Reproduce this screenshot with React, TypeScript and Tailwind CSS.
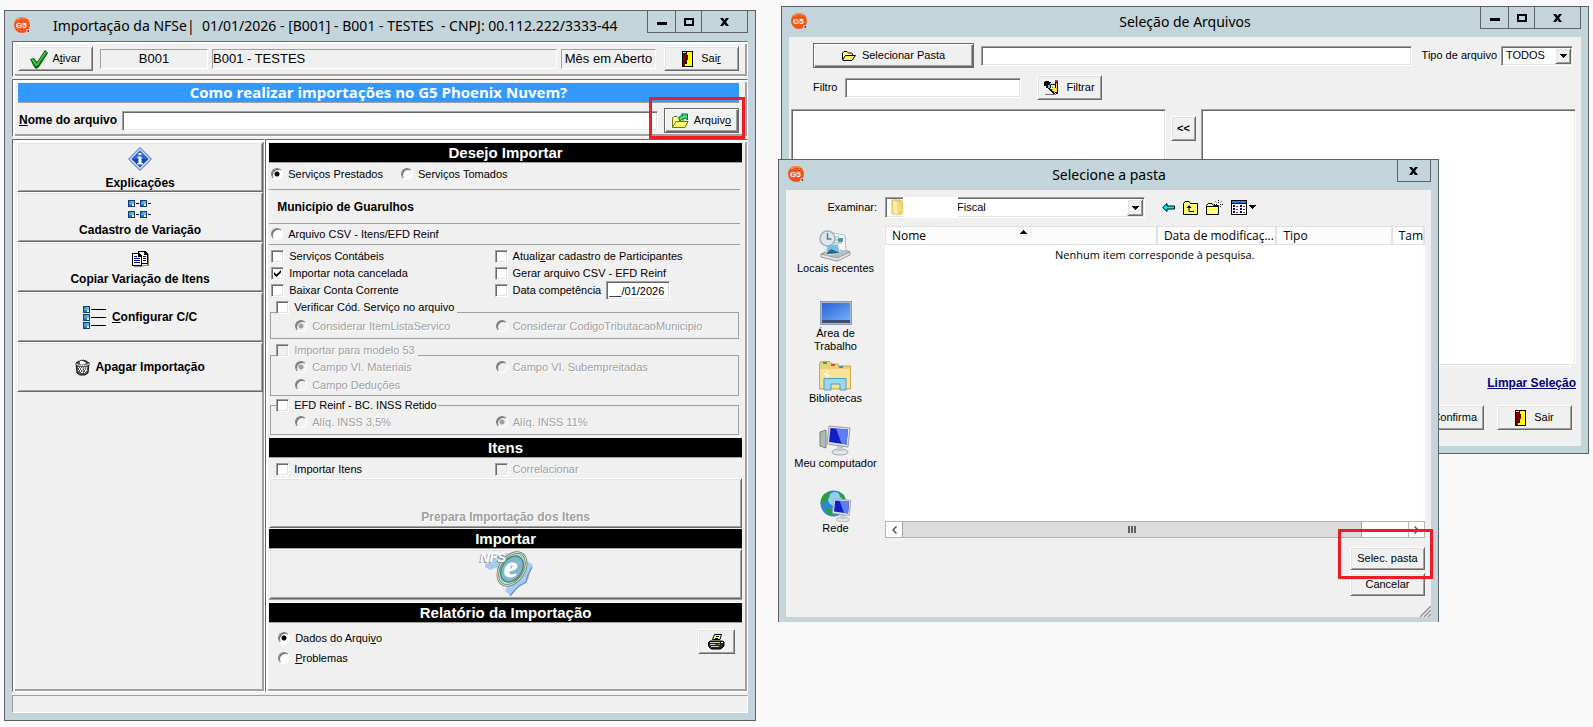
import type { InputHTMLAttributes, ReactNode } from 'react';
import clsx from 'clsx';

const raised =
  'border border-t-white border-l-white border-b-[#696969] border-r-[#696969] bg-[#f0f0f0] shadow-[inset_1px_1px_0_#e3e3e3,inset_-1px_-1px_0_#a0a0a0]';
const raisedDefault =
  'border border-[#696969] bg-[#f0f0f0] shadow-[inset_1px_1px_0_#fff,inset_-1px_-1px_0_#696969,inset_-2px_-2px_0_#a0a0a0]';
const sunken =
  'border border-t-[#a0a0a0] border-l-[#a0a0a0] border-b-white border-r-white bg-white shadow-[inset_1px_1px_0_#696969,inset_-1px_-1px_0_#e3e3e3]';
const field = 'border border-t-[#a0a0a0] border-l-[#a0a0a0] border-b-white border-r-white';
const panel =
  'border border-t-[#696969] border-l-[#696969] border-b-white border-r-white shadow-[inset_2px_2px_0_#fff,inset_-2px_-2px_0_#a0a0a0]';
const boldText = 'text-[12px] font-bold';

function AppIcon() {
  return (
    <svg width="17" height="17" viewBox="0 0 17 17" aria-hidden="true">
      <circle cx="8" cy="8" r="8" fill="#f0561d" />
      <path d="M3 3a7 7 0 0 1 9-1" stroke="#f98a4c" strokeWidth="2" fill="none" />
      <text x="2" y="11" fontSize="8" fontWeight="700" fontFamily="Liberation Sans" fill="#fff">G5</text>
      <circle cx="14" cy="14" r="2" fill="#d9c9cf" />
      <path d="M13 13h2v2h-1z" fill="#7d3f55" />
    </svg>
  );
}

function CheckIcon() {
  return (
    <svg width="18" height="20" viewBox="0 0 18 20" aria-hidden="true">
      <path d="M0 10l4-1 3 4L15 1l3 3L9 18l-3 2-2-2z" fill="#0a4a14" />
      <path d="M1 10l3-.500 3 5L15 2.500l2 1.500L8 17l-3 1z" fill="#12a81e" />
      <path d="M2 10.500l4.500 5.500L15.500 3" stroke="#5fe066" fill="none" />
    </svg>
  );
}

function DoorIcon() {
  return (
    <svg width="11" height="16" viewBox="0 0 11 16" shapeRendering="crispEdges" aria-hidden="true">
      <path d="M0 0h11v16H0z" fill="#000" />
      <path d="M5 1h5v14H2v-2h2V8h1z" fill="#ff0" />
      <path d="M1 1h4v3h1v5H5v4H3v2H1z" fill="#800000" />
      <path d="M2 1h2v1H2z" fill="#0ff" />
      <path d="M4 4h2v1H4zM4 6h1v7H3v-1h1z" fill="#000" />
      <path d="M1 1h1v1H1z" fill="#fff" />
    </svg>
  );
}

function OpenFolderIcon() {
  return (
    <svg width="14" height="10" viewBox="0 0 14 10" aria-hidden="true">
      <path d="M.5 8.500V2L2 .5h3L6.500 2h3L10.500 3v1.500" fill="#ffff8c" stroke="#000" />
      <path d="M.5 9L3.500 4.500h10L10 9.500H1z" fill="#fff36b" stroke="#000" />
    </svg>
  );
}

function ArquivoIcon() {
  return (
    <svg width="17" height="16" viewBox="0 0 17 16" aria-hidden="true">
      <path d="M.5 14V5L2 3.500h3L6.500 5H11v3" fill="#ffff9c" stroke="#77720d" />
      <path d="M.5 14.500L4 8.500h12l-3 6z" fill="#ffff6e" stroke="#77720d" />
      <path d="M7 6c0-3 2-3.500 4-3.500L9.500 1h6v6L13.500 5C12 6 11 5 8 8z" fill="#3fe07c" stroke="#0b6b3a" />
    </svg>
  );
}

function FiltrarIcon() {
  return (
    <svg width="16" height="16" viewBox="0 0 16 16" shapeRendering="crispEdges" aria-hidden="true">
      <path d="M1 1h4v1h2v3H4v3H2V6H0V2h1z" fill="#000" />
      <path d="M5 4h6l2 3-1 6-2 1-7-6z" fill="#000" />
      <path d="M6 3h1v2H6v3H4V5h2z" fill="#3cf" />
      <path d="M7 5h4l1 2v4l-2 2-4-4 1-2z" fill="#ffef7a" />
      <path d="M8 7h1v1H8zM7 9h2v1H7zM9 11h2v1H9z" fill="#7a6a10" />
      <path d="M11 1h3v13h-2z" fill="#000" />
      <path d="M12 3h1v9h-1z" fill="#ffe14a" />
      <path d="M11 0h3v2h-3z" fill="#e22" />
      <path d="M1 14h11v1H1z" fill="#777" />
    </svg>
  );
}

function InfoIcon() {
  return (
    <svg width="24" height="24" viewBox="0 0 24 24" aria-hidden="true">
      <path d="M12 .8L23.200 12 12 23.200.8 12z" fill="#dfe8fa" stroke="#8398cc" strokeLinejoin="round" strokeWidth="1.500" />
      <path d="M12 3.500L20.500 12 12 20.500 3.500 12z" fill="#1746b8" />
      <path d="M12 3.500L20.500 12H3.500z" fill="#2c66dc" />
      <path d="M10.500 6h3v2h-3zM9.500 9.500h4V16H15v1.500H9.500V16h1v-5h-1z" fill="#fff" />
    </svg>
  );
}

function Thumb({ x, y }: { x: number; y: number }) {
  return (
    <g transform={`translate(${x} ${y})`}>
      <path d="M0 0h7v7H0z" fill="#123a8c" />
      <path d="M1 1h5v5H1z" fill="#5cb8ee" />
      <path d="M1 1h2v2H1z" fill="#2fae3f" />
      <path d="M4 4h2v2H4z" fill="#fff3a0" />
      <path d="M1 4h3v2H1z" fill="#2674d4" />
    </g>
  );
}

function VariacaoIcon() {
  return (
    <svg width="24" height="18" viewBox="0 0 24 18" shapeRendering="crispEdges" aria-hidden="true">
      <Thumb x={0} y={0} />
      <Thumb x={12} y={0} />
      <Thumb x={0} y={11} />
      <Thumb x={12} y={11} />
      <path d="M8 3h3v1H8zM20 3h3v1h-3zM8 14h3v1H8zM20 14h3v1h-3z" fill="#000" />
    </svg>
  );
}

function ListaIcon() {
  return (
    <svg width="24" height="23" viewBox="0 0 24 23" shapeRendering="crispEdges" aria-hidden="true">
      <Thumb x={0} y={0} />
      <Thumb x={0} y={8} />
      <Thumb x={0} y={16} />
      <path d="M8 3h15v1H8zM8 11h15v1H8zM8 19h15v1H8z" fill="#000" />
    </svg>
  );
}

function CopiarIcon() {
  return (
    <svg width="17" height="16" viewBox="0 0 17 16" shapeRendering="crispEdges" aria-hidden="true">
      <path d="M2 15h9v1H2zM15 3h2v12h-6v-1h4z" fill="#888" />
      <path d="M6 0h7l3 3v10H6z" fill="#000" />
      <path d="M7 1h5v3h3v8H7z" fill="#fffde0" />
      <path d="M11 5h3v1h-3zM11 7h3v1h-3zM11 9h3v1h-3z" fill="#000080" />
      <path d="M0 2h7l3 3v10H0z" fill="#000" />
      <path d="M1 3h5v3h3v8H1z" fill="#fff" />
      <path d="M2 5h3v1H2zM2 7h6v1H2zM2 9h6v1H2zM2 11h6v1H2z" fill="#000080" />
    </svg>
  );
}

function LixeiraIcon() {
  return (
    <svg width="15" height="17" viewBox="0 0 15 17" aria-hidden="true">
      <path d="M1 4l3-2 2 1 2-2 3 1 3 2-1 10-3 2H5l-3-2z" fill="#555" stroke="#111" />
      <path d="M4 3l2-2 3 1 3 2-3 2H5z" fill="#fff" stroke="#444" />
      <path d="M1 5c3 2 10 2 13 0" stroke="#eee" fill="none" />
      <path d="M3 8l2 2-2 2M5 8l2 2-2 2 2 2M8 8l-1 2 1 2-1 2M10 8l-1 2 2 2-2 2M12 8l-1 2 1 2" stroke="#fff" fill="none" />
    </svg>
  );
}

function ImpressoraIcon() {
  return (
    <svg width="17" height="16" viewBox="0 0 17 16" aria-hidden="true">
      <path d="M2 7h12l2 1v4l-3 3H3l-2-2-1-4z" fill="#222" stroke="#000" />
      <path d="M6.500.5h7L12 5.500H4.500z" fill="#ffff5a" stroke="#000" />
      <path d="M8 2.500h3M7 4.500h3" stroke="#000" />
      <path d="M2 8.500h10M2 10.500h5M3 12.500h8" stroke="#d0d0d0" />
      <path d="M7 10.500h2" stroke="#f22" />
      <path d="M10 10.500h2" stroke="#2c2" />
      <path d="M13 8.500h2" stroke="#fff" />
    </svg>
  );
}

function NfseLogo() {
  return (
    <svg width="56" height="46" viewBox="0 0 56 46" aria-hidden="true">
      <path
        d="M7 13l6-2 5-5 10-4 9 1 5 8 7-1 6 4-3 7-2 8-8 5-4 3-6 7-5-4 3-6-6-7-3-9-4-1-5 2-5-3z"
        fill="#a5cbf3"
      />
      <path d="M54 16l-4 8-2 7-7 4-4 4-5 6" stroke="#6b97cf" fill="none" strokeWidth="1.500" />
      <g transform="rotate(34 34 18)">
        <ellipse cx="34" cy="18" rx="12" ry="18" fill="#b9d9e6" stroke="#66805c" strokeWidth="2.500" />
        <ellipse cx="34" cy="18" rx="12" ry="18" fill="none" stroke="#dfe0c8" />
        <ellipse cx="34" cy="18" rx="10" ry="14" fill="#7fb6d2" stroke="#4f8a6c" strokeWidth="1.500" />
      </g>
      <text x="1" y="12" fontSize="13" fontStyle="italic" fontWeight="700" fontFamily="Liberation Sans" fill="#8a8f98">NFS</text>
      <text x="2" y="11" fontSize="13" fontStyle="italic" fontWeight="700" fontFamily="Liberation Sans" fill="#fff" aria-hidden="true">NFS</text>
      <text x="26" y="26" fontSize="30" fontStyle="italic" fontWeight="700" fontFamily="Liberation Serif" fill="#fff" stroke="#fff">e</text>
    </svg>
  );
}

function FolderSmallIcon() {
  return (
    <svg width="14" height="16" viewBox="0 0 14 16" aria-hidden="true">
      <path d="M1 1h8l3 2v11l-5 1.500-6-1z" fill="#f2d777" stroke="#d9b548" />
      <path d="M2 1.500L6.500 3v12.500L2 14z" fill="#fbeeb0" />
    </svg>
  );
}

function RecentesIcon() {
  return (
    <svg width="32" height="32" viewBox="0 0 32 32" aria-hidden="true">
      <path d="M2 24l16-7 13 5-13 9z" fill="#b9bcbf" stroke="#8d9193" />
      <path d="M2 24l16 4 13-6v3l-13 6-16-4z" fill="#e5e7e8" stroke="#999" />
      <path d="M13 3l13 2 1 16-14-2z" fill="#f6f8f9" stroke="#b6c0c5" />
      <path d="M15 7h5M15 10h5M15 13h8" stroke="#98a5ad" />
      <path d="M19 8h5v4h-5z" fill="#4d99a6" />
      <path d="M8 15l11-1 2 9-14 2z" fill="#6fc1e8" stroke="#d6e4ea" />
      <path d="M7 24l5-5 9 4z" fill="#28657c" />
      <circle cx="8.500" cy="8.500" r="7.500" fill="#dce8ee" stroke="#9fb0b9" strokeWidth="1.500" />
      <path d="M8.500 3v6h4" stroke="#5f7682" fill="none" strokeWidth="1.500" />
    </svg>
  );
}

function DesktopIcon() {
  return (
    <svg width="32" height="32" viewBox="0 0 32 32" aria-hidden="true">
      <defs>
        <linearGradient id="desk" x1="0" y1="0" x2="1" y2="1">
          <stop offset="0" stopColor="#2b5fd6" />
          <stop offset="1" stopColor="#6fb1f8" />
        </linearGradient>
      </defs>
      <path d="M.5 6.500h31v23H.5z" fill="#aab8d0" stroke="#8b9bb8" />
      <path d="M2 8h28v17H2z" fill="url(#desk)" />
      <path d="M2 25h28v3H2z" fill="#40506c" />
    </svg>
  );
}

function BibliotecasIcon() {
  return (
    <svg width="32" height="32" viewBox="0 0 32 32" aria-hidden="true">
      <path d="M.5 4L2 1.500h9L13 4h6l1 2h11.500v23H.5z" fill="#ecd079" stroke="#cda646" />
      <path d="M4 2h4v2H4z" fill="#21b534" />
      <path d="M12 4h4v2h-4z" fill="#dd4526" />
      <path d="M20 6h4v2h-4z" fill="#3a8fe0" />
      <path d="M1 9h30v19H1z" fill="#f8e29a" />
      <path d="M5 18.500h22V30h-6v-6h-9v6H5z" fill="#9ad6ef" stroke="#4f9fc4" />
      <path d="M8 11v7M5 14l6 2" stroke="#fff" />
    </svg>
  );
}

function Monitor() {
  return (
    <>
      <ellipse cx="21" cy="27" rx="8" ry="3" fill="#e2e4e6" stroke="#a2a5a8" />
      <path d="M18 20h6v6h-6z" fill="#c7cacd" />
      <path d="M10 1l21 2-2 19-21-3z" fill="#dfe2e6" stroke="#9aa0a8" />
      <path d="M11.500 3l17.500 1.500-1.500 15-17.500-2.500z" fill="#0e1fc4" />
      <path d="M17 3.500l12 1-1.500 15-5-1z" fill="#5f7df0" />
    </>
  );
}

function ComputadorIcon() {
  return (
    <svg width="32" height="32" viewBox="0 0 32 32" aria-hidden="true">
      <path d="M1 7l6-2v18l-6-2z" fill="#b5b8bb" stroke="#7a7e82" />
      <path d="M3 8v4" stroke="#7ec83e" />
      <Monitor />
    </svg>
  );
}

function RedeIcon() {
  return (
    <svg width="32" height="32" viewBox="0 0 32 32" aria-hidden="true">
      <circle cx="13.500" cy="13.500" r="13" fill="#2f86d8" />
      <circle cx="15" cy="9" r="7" fill="#8fd0f4" />
      <path d="M4 4l7-3-2 7-5 5-3 2c-1-5 1-8 3-11zM18 1l6 4 1 5-5-3zM5 18l6 1 3 7c-5-1-8-4-9-8z" fill="#2f9e36" />
      <g transform="translate(6 8) scale(.8)">
        <Monitor />
      </g>
    </svg>
  );
}

function BackIcon() {
  return (
    <svg width="13" height="11" viewBox="0 0 13 11" aria-hidden="true">
      <path d="M.7 5.500L5 1.500v2.500h7.500v3H5v2.500z" fill="#00f0f0" stroke="#000" />
    </svg>
  );
}

function UpFolderIcon() {
  return (
    <svg width="15" height="14" viewBox="0 0 15 14" aria-hidden="true">
      <path d="M.5 13.500v-11l1.500-2h4l1.500 2h7v11z" fill="#ffff70" stroke="#000" />
      <path d="M3.500 7L6 4l2.500 3z" fill="#000" />
      <path d="M6 6v4.500h5" fill="none" stroke="#000" />
    </svg>
  );
}

function NewFolderIcon() {
  return (
    <svg width="17" height="16" viewBox="0 0 17 16" aria-hidden="true">
      <path d="M.5 14.500v-9l1.500-2h4l1.500 2h5v9z" fill="#ffff70" stroke="#000" />
      <path d="M.5 6.500h12" stroke="#000" />
      <path d="M12.500 0v3M12.500 6v3M8 4.500h3M14 4.500h3M9.500 1.500l1.500 1.500M14 6l1.500 1.500M15.500 1.500L14 3" stroke="#000" strokeDasharray="1 1" />
    </svg>
  );
}

function ViewIcon() {
  return (
    <svg width="25" height="15" viewBox="0 0 25 15" shapeRendering="crispEdges" aria-hidden="true">
      <path d="M0 0h16v15H0z" fill="#000" />
      <path d="M1 1h14v2H1z" fill="#1f7fe8" />
      <path d="M1 4h14v10H1z" fill="#fff" />
      <path d="M2 5h2v2H2zM2 8h2v2H2zM2 11h2v2H2zM9 5h2v2H9zM9 8h2v2H9zM9 11h2v2H9z" fill="#000080" />
      <path d="M5 6h2v1H5zM5 9h2v1H5zM5 12h2v1H5zM12 6h2v1h-2zM12 9h2v1h-2zM12 12h2v1h-2z" fill="#444" />
      <path d="M18 5h7v1h-1v1h-1v1h-1v1h-1V8h-1V7h-1V6h-1z" fill="#000" />
    </svg>
  );
}

function WindowButtons({ closeOnly }: { closeOnly?: boolean }) {
  return (
    <div className="flex h-[22px] shrink-0 border border-t-0 border-[#5c6068]">
      {!closeOnly && (
        <>
          <button aria-label="Minimizar" className="flex w-7 items-center justify-center border-r border-[#5c6068] pt-1">
            <span className="h-[3px] w-[10px] bg-black" />
          </button>
          <button aria-label="Maximizar" className="flex w-[26px] items-center justify-center border-r border-[#5c6068]">
            <span className="h-2 w-[10px] border-2 border-black" />
          </button>
        </>
      )}
      <button aria-label="Fechar" className={clsx('flex items-center justify-center', closeOnly ? 'w-8' : 'w-[45px]')}>
        <svg width="9" height="8" viewBox="0 0 9 8" aria-hidden="true">
          <path d="M0 0h3l1.500 2L6 0h3L6 4l3 4H6L4.500 6 3 8H0l3-4z" fill="#000" />
        </svg>
      </button>
    </div>
  );
}

interface WindowProps {
  title: string;
  closeOnly?: boolean;
  leftTitle?: boolean;
  className?: string;
  children: ReactNode;
}

function Window({ title, closeOnly, leftTitle, className, children }: WindowProps) {
  return (
    <section className={clsx('min-w-0 border border-[#5c6068] bg-[#c3d5da] px-[7px]', className)}>
      <header className="flex h-[30px] items-start">
        <div className="pt-[6px] pl-[2px]">
          <AppIcon />
        </div>
        <h1
          className={clsx(
            "min-w-0 flex-1 whitespace-pre pt-1 font-['Noto_Sans',sans-serif] text-[14px] leading-[22px]",
            leftTitle ? 'pl-[22px]' : 'text-center',
            !leftTitle && (closeOnly ? 'pl-4' : 'pl-[82px]'),
          )}
        >
          {title}
        </h1>
        <WindowButtons closeOnly={closeOnly} />
      </header>
      {children}
    </section>
  );
}

type OptionProps = InputHTMLAttributes<HTMLInputElement> & { label: ReactNode };

function Check({ label, disabled, ...rest }: OptionProps) {
  return (
    <label className={clsx('flex items-center gap-[5px] whitespace-nowrap', disabled && 'text-[#a0a0a0] text-shadow-[1px_1px_0_#fff]')}>
      <span className="relative flex shrink-0">
        <input
          type="checkbox"
          disabled={disabled}
          {...rest}
          className={clsx(sunken, 'peer size-[13px] appearance-none disabled:bg-[#f0f0f0]')}
        />
        <svg className="pointer-events-none absolute inset-[3px] hidden peer-checked:block" width="7" height="7" viewBox="0 0 7 7" aria-hidden="true">
          <path d="M0 2l2.500 2.500L7 0v2.500L2.500 7 0 4.500z" fill="#000" />
        </svg>
      </span>
      <span>{label}</span>
    </label>
  );
}

function Radio({ label, disabled, ...rest }: OptionProps) {
  return (
    <label className={clsx('flex items-center gap-[5px] whitespace-nowrap', disabled && 'text-[#a0a0a0] text-shadow-[1px_1px_0_#fff]')}>
      <input
        type="radio"
        disabled={disabled}
        {...rest}
        className="size-3 shrink-0 appearance-none rounded-full border border-t-[#808080] border-l-[#808080] border-b-white border-r-white bg-white shadow-[inset_1px_1px_0_#696969] checked:bg-[radial-gradient(circle,#000_2px,#fff_3px)] disabled:bg-[#f0f0f0] disabled:checked:bg-[radial-gradient(circle,#a0a0a0_2px,#f0f0f0_3px)]"
      />
      <span>{label}</span>
    </label>
  );
}

function SectionBar({ children }: { children: ReactNode }) {
  return (
    <div className="border-b border-[#a0a0a0]">
      <h2 className="h-[19px] bg-black text-center text-[15px] leading-[19px] font-bold text-white">{children}</h2>
    </div>
  );
}

function MenuButton({ children, row }: { children: ReactNode; row?: boolean }) {
  return (
    <button
      className={clsx(
        raised,
        boldText,
        'flex h-[50px] items-center justify-center gap-[5px]',
        !row && 'flex-col pt-1',
      )}
    >
      {children}
    </button>
  );
}

const twoColumns = 'grid grid-cols-[223fr_247fr]';
const twoInnerColumns = 'grid h-[18px] grid-cols-[201fr_243fr] items-center';

function ImportOptions() {
  return (
    <div className={clsx(panel, 'min-w-0 flex-1 pt-[3px] pr-[5px] pb-[3px] pl-[3px]')}>
      <SectionBar>Desejo Importar</SectionBar>
      <div className="mr-[2px] flex h-[27px] items-center gap-[18px] border-b border-[#a0a0a0] pb-1 pl-[2px]">
        <Radio name="servico" label="Serviços Prestados" defaultChecked />
        <Radio name="servico" label="Serviços Tomados" />
      </div>
      <p className={clsx(boldText, 'mr-[2px] h-[34px] border-b border-[#a0a0a0] pl-2 leading-[34px]')}>
        Município de Guarulhos
      </p>
      <div className="mr-[2px] flex h-[21px] items-center border-b border-[#a0a0a0] pl-[2px]">
        <Radio name="servico" label="Arquivo CSV - Itens/EFD Reinf" />
      </div>

      <div className={clsx(twoColumns, 'auto-rows-[17px] items-center pt-[3px] pl-[2px]')}>
        <Check label="Serviços Contábeis" />
        <Check label={<>Atuali<u>z</u>ar cadastro de Participantes</>} />
        <Check label="Importar nota cancelada" defaultChecked />
        <Check label="Gerar arquivo CSV - EFD Reinf" />
        <Check label="Baixar Conta Corrente" />
        <div className="flex items-center gap-[5px]">
          <Check label="Data competência" />
          <input aria-label="Data" defaultValue="__/01/2026" className={clsx(sunken, 'h-[19px] w-16 px-[2px]')} />
        </div>
      </div>

      <fieldset className="relative mt-[13px] mr-[3px] ml-[1px] border border-[#a0a0a0] pt-1 pb-[3px] pl-6">
        <legend className="absolute -top-[13px] left-[5px] bg-[#f0f0f0] pr-[3px]">
          <Check label="Verificar Cód. Serviço no arquivo" />
        </legend>
        <div className={twoInnerColumns}>
          <Radio name="cod" label="Considerar ItemListaServico" defaultChecked disabled />
          <Radio name="cod" label="Considerar CodigoTributacaoMunicipio" disabled />
        </div>
      </fieldset>
      <fieldset className="relative mt-4 mr-[3px] ml-[1px] border border-[#a0a0a0] pt-[2px] pb-[1px] pl-6">
        <legend className="absolute -top-[13px] left-[5px] bg-[#f0f0f0] pr-[3px]">
          <Check label="Importar para modelo 53" disabled />
        </legend>
        <div className={twoInnerColumns}>
          <Radio name="campo" label="Campo VI. Materiais" defaultChecked disabled />
          <Radio name="campo" label="Campo VI. Subempreitadas" disabled />
        </div>
        <div className={twoInnerColumns}>
          <Radio name="campo" label="Campo Deduções" disabled />
        </div>
      </fieldset>
      <fieldset className="relative mt-[9px] mr-[3px] mb-[3px] ml-[1px] border border-[#a0a0a0] pt-[7px] pb-[3px] pl-6">
        <legend className="absolute -top-2 left-[5px] bg-[#f0f0f0] pr-[1px]">
          <Check label="EFD Reinf - BC. INSS Retido" />
        </legend>
        <div className={twoInnerColumns}>
          <Radio name="aliq" label="Alíq. INSS 3,5%" disabled />
          <Radio name="aliq" label="Alíq. INSS 11%" defaultChecked disabled />
        </div>
      </fieldset>

      <SectionBar>Itens</SectionBar>
      <div className={clsx(twoColumns, 'h-5 items-center pt-[2px] pl-[2px]')}>
        <div className="pl-[5px]">
          <Check label="Importar Itens" />
        </div>
        <Check label="Correlacionar" disabled />
      </div>
      <button
        disabled
        className={clsx(raised, boldText, 'mb-[1px] flex h-[50px] w-full items-end justify-center pb-[2px] text-[#a0a0a0] text-shadow-[1px_1px_0_#fff]')}
      >
        Prepara Importação dos Itens
      </button>

      <SectionBar>Importar</SectionBar>
      <button aria-label="Importar NFSe" className={clsx(raised, 'flex h-[50px] w-full items-center justify-center')}>
        <NfseLogo />
      </button>
      <div className="h-1 border-y border-t-[#a0a0a0] border-b-white" />

      <SectionBar>Relatório da Importação</SectionBar>
      <div className="flex h-[65px] items-start justify-between pr-[7px] pl-[9px]">
        <div className="flex flex-col pt-[5px]">
          <div className="flex h-5 items-center">
            <Radio name="relatorio" label={<>Dados do Arqui<u>v</u>o</>} defaultChecked />
          </div>
          <div className="flex h-5 items-center">
            <Radio name="relatorio" label={<><u>P</u>roblemas</>} />
          </div>
        </div>
        <button aria-label="Imprimir" className={clsx(raised, 'mt-[6px] flex h-[25px] w-[37px] items-center justify-center')}>
          <ImpressoraIcon />
        </button>
      </div>
    </div>
  );
}

function ImportWindow() {
  return (
    <Window
      title="Importação da NFSe|  01/01/2026 - [B001] - B001 - TESTES  - CNPJ: 00.112.222/3333-44"
      leftTitle
      className="relative mt-[10px] pb-[7px]"
    >
      <div className="flex flex-col gap-[2px] bg-[#f0f0f0]">
        <div className={clsx(panel, 'flex items-center pt-1 pr-2 pb-[5px] pl-[5px]')}>
          <button className={clsx(raised, 'flex h-[25px] w-[75px] items-center justify-center gap-1')}>
            <CheckIcon />
            <span>A<u>t</u>ivar</span>
          </button>
          <div className="ml-[7px] flex min-w-0 flex-1 gap-1 text-[13px] leading-[18px]">
            <div className={clsx(field, 'w-[108px] text-center')}>B001</div>
            <div className={clsx(field, 'min-w-0 flex-1')}>B001 - TESTES</div>
            <div className={clsx(field, 'w-[95px] text-center whitespace-nowrap')}>Mês em Aberto</div>
          </div>
          <button className={clsx(raised, 'ml-2 flex h-[25px] w-[75px] items-center justify-center gap-2')}>
            <DoorIcon />
            <span>Sai<u>r</u></span>
          </button>
        </div>

        <div className={clsx(panel, 'pt-[3px] pr-2 pb-[3px] pl-[5px]')}>
          <div className="border-b border-[#a0a0a0]">
            <p className="h-[19px] bg-[#3399ff] text-center font-['Open_Sans',sans-serif] text-[15px] leading-[19px] font-bold text-white">
              Como realizar importações no G5 Phoenix Nuvem?
            </p>
          </div>
          <div className="mt-[5px] flex items-center">
            <label htmlFor="arquivo" className={clsx(boldText, 'w-[104px] pl-[1px] whitespace-nowrap')}>
              <u>N</u>ome do arquivo
            </label>
            <input id="arquivo" className={clsx(sunken, 'h-5 min-w-0 flex-1 px-1')} />
            <button className={clsx(raisedDefault, 'ml-[6px] flex h-[25px] w-[75px] items-center justify-center gap-[5px]')}>
              <ArquivoIcon />
              <span>Arquiv<u>o</u></span>
            </button>
          </div>
        </div>

        <div className="flex">
          <nav className={clsx(panel, 'flex w-[34.4%] flex-col pt-[2px] pr-[1px] pl-1')}>
            <MenuButton><InfoIcon />Explicações</MenuButton>
            <MenuButton><VariacaoIcon />Cadastro de Variação</MenuButton>
            <MenuButton><CopiarIcon />Copiar Variação de Itens</MenuButton>
            <MenuButton row><ListaIcon /><span><u>C</u>onfigurar C/C</span></MenuButton>
            <MenuButton row><LixeiraIcon />Apagar Importação</MenuButton>
          </nav>
          <ImportOptions />
        </div>
        <div className="mt-[1px] h-[18px] border border-t-[#a0a0a0] border-l-[#a0a0a0] border-b-white border-r-white" />
      </div>
      <div className="pointer-events-none absolute top-[86px] right-[10px] h-[42px] w-[96px] border-[3px] border-[#ed1c24]" />
    </Window>
  );
}

function ArquivosWindow() {
  return (
    <Window title="Seleção de Arquivos" className="mt-[6px] ml-[3px] pb-[7px]">
      <div className="bg-[#f0f0f0] pt-[6px] pb-4">
        <div className="flex items-center pr-2 pl-6">
          <button className={clsx(raisedDefault, 'flex h-[25px] w-[161px] items-center justify-center gap-[6px]')}>
            <OpenFolderIcon />
            Selecionar Pasta
          </button>
          <input aria-label="Pasta" className={clsx(sunken, 'ml-[7px] h-5 min-w-0 flex-1 px-1')} />
          <label htmlFor="tipo" className="ml-[10px] whitespace-nowrap">Tipo de arquivo</label>
          <div className="relative ml-1">
            <select id="tipo" className={clsx(sunken, 'block h-5 w-[72px] appearance-none pl-1')}>
              <option>TODOS</option>
            </select>
            <DropArrow />
          </div>
        </div>
        <div className="mt-[7px] flex items-center pl-6">
          <label htmlFor="filtro" className="w-8">Filtro</label>
          <input id="filtro" className={clsx(sunken, 'h-5 w-[176px] px-1')} />
          <button className={clsx(raised, 'ml-4 flex h-[25px] w-[65px] items-center justify-center gap-[6px]')}>
            <FiltrarIcon />
            Filtrar
          </button>
        </div>
        <div className="mt-[9px] flex h-[257px] gap-[5px] pr-[5px] pl-[2px]">
          <div className={clsx(sunken, 'flex-1')} />
          <button className={clsx(raised, 'mt-[7px] h-[25px] w-[25px] font-bold')}>&lt;&lt;</button>
          <div className={clsx(sunken, 'flex-1')} />
        </div>
        <div className="mt-[9px] pr-[5px] text-right leading-4">
          <a href="#limpar" className={clsx(boldText, 'text-[#000080] underline')}>Limpar Seleção</a>
        </div>
        <div className="mt-[14px] flex justify-end gap-[13px] pr-[9px]">
          <button className={clsx(raised, 'flex h-[25px] w-[75px] items-center justify-end gap-1 pr-[6px]')}>
            Confirma
          </button>
          <button className={clsx(raised, 'flex h-[25px] w-[75px] items-center justify-center gap-2')}>
            <DoorIcon />
            Sair
          </button>
        </div>
      </div>
    </Window>
  );
}

function DropArrow() {
  return (
    <span className={clsx(raised, 'pointer-events-none absolute top-[2px] right-[2px] bottom-[2px] flex w-4 items-center justify-center')}>
      <svg width="7" height="4" viewBox="0 0 7 4" shapeRendering="crispEdges" aria-hidden="true">
        <path d="M0 0h7v1H6v1H5v1H4v1H3V3H2V2H1V1H0z" fill="#000" />
      </svg>
    </span>
  );
}

const places = [
  { label: 'Locais recentes', icon: <RecentesIcon /> },
  { label: 'Área de Trabalho', icon: <DesktopIcon /> },
  { label: 'Bibliotecas', icon: <BibliotecasIcon /> },
  { label: 'Meu computador', icon: <ComputadorIcon /> },
  { label: 'Rede', icon: <RedeIcon /> },
];

function PastaDialog() {
  const th = 'border-r-2 border-b border-[#e0e0e0] bg-[#fcfcfc] pl-[6px] text-left font-normal whitespace-nowrap';
  return (
    <Window title="Selecione a pasta" closeOnly className="absolute top-[159px] left-0 w-[81.5%] border-b-0 pb-[5px]">
      <div className="relative bg-[#f0f0f0] pt-[7px] pr-[6px] pb-[21px]">
        <div className="flex items-center">
          <label htmlFor="examinar" className="w-[99px] pr-2 text-right">Examinar:</label>
          <div className="relative">
            <select id="examinar" className={clsx(sunken, 'block h-[21px] w-[260px] appearance-none pl-[71px]')}>
              <option>Fiscal</option>
            </select>
            <span className="pointer-events-none absolute top-[2px] left-[6px]">
              <FolderSmallIcon />
            </span>
            <span className="pointer-events-none absolute top-0 left-[18px] h-5 w-[55px] bg-white" />
            <DropArrow />
          </div>
          <div className="flex items-center gap-2 pl-[17px]">
            <button aria-label="Voltar"><BackIcon /></button>
            <button aria-label="Acima"><UpFolderIcon /></button>
            <button aria-label="Nova pasta"><NewFolderIcon /></button>
            <button aria-label="Exibir"><ViewIcon /></button>
          </div>
        </div>

        <div className="mt-2 flex">
          <ul className="flex w-[99px] shrink-0 flex-col pt-1">
            {places.map((p) => (
              <li key={p.label} className="h-[65px] last:h-12">
                <button className="mx-auto flex flex-col items-center leading-[13px]">
                  {p.icon}
                  <span className={p.label === 'Área de Trabalho' ? 'w-14' : ''}>{p.label}</span>
                </button>
              </li>
            ))}
          </ul>
          <div className="flex h-[312px] min-w-0 flex-1 flex-col bg-white font-['Open_Sans',sans-serif]">
            <div className="relative min-h-0 flex-1">
              <table className="w-full table-fixed border-collapse">
                <thead>
                  <tr className="h-[18px] border-t border-[#e0e0e0] text-[12px] leading-[16px]">
                    <th className={clsx(th, 'w-[50.4%] border-l')}>Nome</th>
                    <th className={clsx(th, 'w-[22.2%]')}>Data de modificaç...</th>
                    <th className={clsx(th, 'w-[21.4%]')}>Tipo</th>
                    <th className={clsx(th, 'border-r-0')}>Tam</th>
                  </tr>
                </thead>
                <tbody>
                  <tr>
                    <td colSpan={4} className="pt-[1px] text-center leading-[18px]">
                      Nenhum item corresponde à pesquisa.
                    </td>
                  </tr>
                </tbody>
              </table>
              <svg className="absolute top-1 left-[25%]" width="7" height="4" viewBox="0 0 7 4" shapeRendering="crispEdges" aria-hidden="true">
                <path d="M3 0h1v1h1v1h1v1h1v1H0V3h1V2h1V1h1z" fill="#000" />
              </svg>
            </div>
            <div className="flex h-[17px] border border-[#b5b5b5]">
              <button aria-label="Rolar à esquerda" className="flex w-4 items-center justify-center">
                <svg width="5" height="8" viewBox="0 0 5 8" aria-hidden="true">
                  <path d="M4.500.5L1 4l3.500 3.500" stroke="#555" strokeWidth="1.500" fill="none" />
                </svg>
              </button>
              <div className="flex w-[85.6%] items-center justify-center gap-[1px] border-x border-[#a0a0a0] bg-[#dcdcdc]">
                <span className="h-[7px] w-[2px] bg-[#606060]" />
                <span className="h-[7px] w-[2px] bg-[#606060]" />
                <span className="h-[7px] w-[2px] bg-[#606060]" />
              </div>
              <button aria-label="Rolar à direita" className="ml-auto flex w-4 items-center justify-center border-l border-[#b5b5b5]">
                <svg width="5" height="8" viewBox="0 0 5 8" aria-hidden="true">
                  <path d="M.5.5L4 4 .5 7.500" stroke="#555" strokeWidth="1.500" fill="none" />
                </svg>
              </button>
            </div>
          </div>
        </div>

        <div className="mt-[9px] flex flex-col items-end gap-[3px]">
          <button className={clsx(raised, 'h-[23px] w-[75px]')}>Selec. pasta</button>
          <button className={clsx(raised, 'h-[23px] w-[75px]')}>Cancelar</button>
        </div>
        <div className="pointer-events-none absolute -right-[2px] bottom-[38px] h-[50px] w-[95px] border-[3px] border-[#ed1c24]" />
        <svg className="absolute right-0 bottom-0" width="11" height="11" viewBox="0 0 11 11" aria-hidden="true">
          <path d="M0 11L11 0M4 11l7-7M8 11l3-3" stroke="#909090" strokeWidth="1.500" />
        </svg>
      </div>
    </Window>
  );
}

export default function App() {
  return (
    <main className="grid min-h-screen grid-cols-[752fr_811fr] items-start gap-[22px] bg-[#f9f9f9] px-1 font-['Liberation_Sans',Arial,sans-serif] text-[11px] leading-[15px] text-black">
      <ImportWindow />
      <div className="relative min-w-0">
        <ArquivosWindow />
        <PastaDialog />
      </div>
    </main>
  );
}
